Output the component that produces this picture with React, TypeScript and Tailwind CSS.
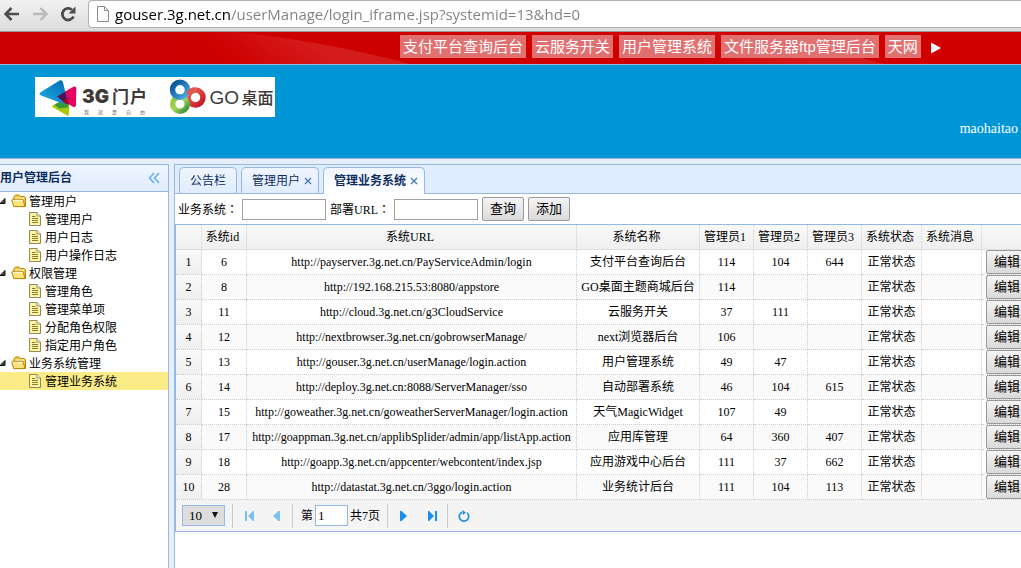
import type { ReactNode } from 'react';

const navItems = ['支付平台查询后台', '云服务开关', '用户管理系统', '文件服务器ftp管理后台', '天网'];

const tree = [
  { name: '管理用户', items: ['管理用户', '用户日志', '用户操作日志'] },
  { name: '权限管理', items: ['管理角色', '管理菜单项', '分配角色权限', '指定用户角色'] },
  { name: '业务系统管理', items: ['管理业务系统'] },
];

const tabs = [
  { name: '公告栏', closable: false },
  { name: '管理用户', closable: true },
  { name: '管理业务系统', closable: true },
];

const columns = ['系统id', '系统URL', '系统名称', '管理员1', '管理员2', '管理员3', '系统状态', '系统消息'];

const rows: string[][] = [
  ['6', 'http://payserver.3g.net.cn/PayServiceAdmin/login', '支付平台查询后台', '114', '104', '644'],
  ['8', 'http://192.168.215.53:8080/appstore', 'GO桌面主题商城后台', '114', '', ''],
  ['11', 'http://cloud.3g.net.cn/g3CloudService', '云服务开关', '37', '111', ''],
  ['12', 'http://nextbrowser.3g.net.cn/gobrowserManage/', 'next浏览器后台', '106', '', ''],
  ['13', 'http://gouser.3g.net.cn/userManage/login.action', '用户管理系统', '49', '47', ''],
  ['14', 'http://deploy.3g.net.cn:8088/ServerManager/sso', '自动部署系统', '46', '104', '615'],
  ['15', 'http://goweather.3g.net.cn/goweatherServerManager/login.action', '天气MagicWidget', '107', '49', ''],
  ['17', 'http://goappman.3g.net.cn/applibSplider/admin/app/listApp.action', '应用库管理', '64', '360', '407'],
  ['18', 'http://goapp.3g.net.cn/appcenter/webcontent/index.jsp', '应用游戏中心后台', '111', '37', '662'],
  ['28', 'http://datastat.3g.net.cn/3ggo/login.action', '业务统计后台', '111', '104', '113'],
];

function BrowserBar() {
  return (
    <div className="flex h-8 items-start border-b border-[#999] bg-linear-to-b from-[#f2f2f2] to-[#dcdcdc] font-['Open_Sans','Noto_Sans_CJK_SC',sans-serif]">
      <div className="flex shrink-0 items-center gap-3 pt-1 pl-1">
        <button aria-label="后退" className="h-5 w-4">
          <svg viewBox="0 0 16 20" className="h-5 w-4" fill="none" stroke="#4d4d4d" strokeWidth="2.6">
            <path d="M1.5 10H15M7.5 4L1.5 10L7.5 16" />
          </svg>
        </button>
        <button aria-label="前进" className="h-5 w-4">
          <svg viewBox="0 0 16 20" className="h-5 w-4" fill="none" stroke="#b9b9b9" strokeWidth="2.4">
            <path d="M1 10H14.5M8.5 4L14.5 10L8.5 16" />
          </svg>
        </button>
        <button aria-label="重新加载" className="h-5 w-4">
          <svg viewBox="0 0 16 20" className="h-5 w-4">
            <path d="M13.5 12.5A5.8 5.8 0 1 1 12 5.8" fill="none" stroke="#4d4d4d" strokeWidth="2.8" />
            <path d="M15.5 2.5V9.5H8.5Z" fill="#4d4d4d" />
          </svg>
        </button>
      </div>
      <div className="ml-3 flex h-7 flex-1 items-center gap-1.5 rounded-l-sm border border-r-0 border-[#b0b0b0] bg-white pl-2">
        <svg viewBox="0 0 12 16" className="h-4 w-3 shrink-0" fill="#fafafa" stroke="#8c8c8c">
          <path d="M.5 .5H7.5L11.5 4.500V15.5H.5ZM7.5 .5V4.500H11.5" />
        </svg>
        <input
          aria-label="地址"
          defaultValue="gouser.3g.net.cn/userManage/login_iframe.jsp?systemid=13&hd=0"
          className="h-6 min-w-0 flex-1 bg-[linear-gradient(90deg,#000_115px,#808080_115px)] bg-clip-text text-[15px] leading-6 text-transparent outline-none"
        />
      </div>
    </div>
  );
}

function TopNav() {
  return (
    <div className="relative flex h-[33px] items-start overflow-hidden border-b border-[#95b8e7] bg-[#d00000] pt-[3px] pl-[400px]">
      <svg viewBox="0 0 1021 32" preserveAspectRatio="none" className="absolute inset-0 h-8 w-full">
        <defs>
          <linearGradient id="shine" gradientUnits="userSpaceOnUse" x1="310" y1="8" x2="270" y2="62">
            <stop offset="0" stopColor="#fff" stopOpacity=".11" />
            <stop offset="1" stopColor="#fff" stopOpacity="0" />
          </linearGradient>
          <linearGradient id="fade" gradientUnits="userSpaceOnUse" x1="150" y1="0" x2="270" y2="0">
            <stop offset="0" stopColor="#cb0000" />
            <stop offset="1" stopColor="#cb0000" stopOpacity="0" />
          </linearGradient>
          <g id="swoosh">
            <path d="M235 0Q330 10 410 32H150V0Z" fill="url(#shine)" />
            <path d="M149 0H270V32H149Z" fill="url(#fade)" />
          </g>
        </defs>
        <path d="M0 0H150V32H0Z" fill="#cb0000" />
        <path d="M235 0H475V32H410Q330 10 235 0Z" fill="#cb0000" opacity=".6" />
        <use href="#swoosh" />
        <use href="#swoosh" x="475" />
      </svg>
      <nav className="relative flex items-center gap-1.5 font-['Liberation_Sans','Noto_Sans_CJK_SC',sans-serif] text-[15px] text-white">
        {navItems.map((item) => (
          <a key={item} href="#" className="h-[23px] bg-[#e17070] px-[3px] leading-[23px] whitespace-nowrap">
            {item}
          </a>
        ))}
        <button aria-label="更多" className="pl-1">
          <svg viewBox="0 0 10 12" className="mt-0.5 h-3 w-2.5" fill="#fff">
            <path d="M0 .5L10 6L0 11.5Z" />
          </svg>
        </button>
      </nav>
    </div>
  );
}

function Logo() {
  return (
    <svg viewBox="0 0 240 40" className="h-10 w-60 bg-white" role="img" aria-label="3G门户 GO桌面">
      <defs>
        <linearGradient id="lb" x1="0" y1="1" x2="1" y2="0">
          <stop offset="0" stopColor="#22b1e6" />
          <stop offset="1" stopColor="#0068b4" />
        </linearGradient>
        <linearGradient id="gb" x1="0" y1="0" x2="1" y2="1">
          <stop offset="0" stopColor="#0a4f94" />
          <stop offset=".6" stopColor="#2a86c6" />
          <stop offset="1" stopColor="#57b6e2" />
        </linearGradient>
        <linearGradient id="gr" x1="0" y1="0" x2="1" y2="1">
          <stop offset="0" stopColor="#ef6a5e" />
          <stop offset="1" stopColor="#c31522" />
        </linearGradient>
        <linearGradient id="gg" x1="0" y1="0" x2="1" y2="1">
          <stop offset="0" stopColor="#8cc63f" />
          <stop offset=".5" stopColor="#a5d45c" />
          <stop offset="1" stopColor="#2c8a32" />
        </linearGradient>
      </defs>
      <path d="M17.500 28.500L33.500 20.500Q34.500 20.500 34.400 22L34 37.500Q33.600 39.300 32 38.600L17.500 30Q16.500 29.200 17.500 28.500Z" fill="#a9cb0b" />
      <path d="M22 19L39 9.500Q41.300 9 41.300 11.500L41 28Q40.500 31 38 29.800L22 20.500Z" fill="#e6005f" />
      <path d="M5.200 15.500L24.500 3.600Q27.500 2.200 28 5.500L32.500 24.500Q32.800 28 29.500 27.300L6 18.500Q3.500 17 5.200 15.500Z" fill="url(#lb)" />
      <path d="M22 19.500L30.300 14.800L32.600 25.500L31 26.500Z" fill="#4b1457" />
      <path d="M27 24L32.600 21.200L33.800 27.300L32 27.600Z" fill="#9e0b20" />
      <path d="M19.500 27.500L24.500 25L30 27.200L33.600 27.300L33 30.500L24 31.500Z" fill="#0f8a4c" opacity=".75" />
      <text x="47" y="26" fontSize="19" fontWeight="900" fill="#3e3a39" fontFamily="Inter, sans-serif">3G</text>
      <g fontSize="17" fontWeight="700" fill="#3e3a39" fontFamily="Noto Sans CJK SC, sans-serif">
        <text x="77" y="25.5">门</text>
        <text x="95" y="25.5">户</text>
      </g>
      <g fontSize="5" fill="#666" fontFamily="Noto Sans CJK SC, sans-serif">
        <text x="49" y="36.5">我</text>
        <text x="63" y="36.5">就</text>
        <text x="77" y="36.5">是</text>
        <text x="91" y="36.5">自</text>
        <text x="105" y="36.5">由</text>
      </g>
      <g fill="none" strokeWidth="5.5">
        <circle cx="160.5" cy="20.5" r="7.5" stroke="url(#gr)" />
        <circle cx="145" cy="27" r="7.3" stroke="url(#gg)" />
        <circle cx="145" cy="12.800" r="7.500" stroke="url(#gb)" />
        <path d="M153.500 17.500A7.500 7.500 0 0 1 160 13" stroke="#e4574e" />
      </g>
      <text x="174.500" y="27" fontSize="19" fill="#3e3a39" fontFamily="Liberation Sans, sans-serif">GO</text>
      <text x="206.500" y="26.500" fontSize="16" fontWeight="500" fill="#3e3a39" fontFamily="Noto Sans CJK SC, sans-serif">桌面</text>
    </svg>
  );
}

function FolderIcon() {
  return (
    <svg viewBox="0 0 16 14" className="h-3.5 w-4 shrink-0">
      <path d="M3 12.500V2.500L4.500 1H8L9.500 2.500H13.500L14.500 3.500V12.500Z" fill="#f0c63c" stroke="#b8860b" />
      <path d="M4 3.500H13V6H4Z" fill="#fff6c0" />
      <path d="M.6 6L1.500 5.200H12L14 12.600H2.800Z" fill="#ffe27a" stroke="#b8860b" />
      <path d="M2 6.500H11.500" stroke="#fffbe0" />
    </svg>
  );
}

function FileIcon() {
  return (
    <svg viewBox="0 0 12 14" className="mx-0.5 h-3.5 w-3 shrink-0">
      <path d="M.5 .5H8L11.500 4V13.500H.5Z" fill="#fff59a" stroke="#8f8766" />
      <path d="M8 .5V4H11.500" fill="#fff" stroke="#8f8766" />
      <path d="M3 4.500H6.500M3 6.500H9M3 8.500H9M3 10.500H9" stroke="#8a7a3a" />
    </svg>
  );
}

function Sidebar() {
  return (
    <aside className="w-[169px] shrink-0 border-t border-r border-[#95b8e7] bg-white">
      <div className="flex h-[27px] items-center justify-between border-b border-[#95b8e7] bg-linear-to-b from-[#eff5ff] to-[#e0ecff] pr-2">
        <h2 className="font-bold text-[#0e2d5f]">用户管理后台</h2>
        <button aria-label="折叠">
          <svg viewBox="0 0 12 12" className="h-3 w-3" fill="none" stroke="#5aaef0" strokeWidth="1.4">
            <path d="M6 1L1.500 6L6 11M11 1L6.500 6L11 11" />
          </svg>
        </button>
      </div>
      <ul className="leading-4">
        {tree.map((group) => (
          <li key={group.name}>
            <div className="flex h-[18px] items-center">
              <svg viewBox="0 0 6 6" className="mr-[5px] h-1.5 w-1.5 shrink-0" fill="#444" stroke="#111">
                <path d="M0 5.500L5 .5V5.500Z" />
              </svg>
              <FolderIcon />
              <span className="pt-0.5 pl-0.5">{group.name}</span>
            </div>
            <ul>
              {group.items.map((item) => (
                <li key={item}>
                  <a
                    href="#"
                    className={
                      item === '管理业务系统'
                        ? 'flex h-[18px] items-center bg-[#fbec88] pl-[27px]'
                        : 'flex h-[18px] items-center pl-[27px]'
                    }
                  >
                    <FileIcon />
                    <span className="pt-0.5 pl-0.5">{item}</span>
                  </a>
                </li>
              ))}
            </ul>
          </li>
        ))}
      </ul>
    </aside>
  );
}

function Tabs() {
  return (
    <div className="flex h-[29px] items-end gap-1 border-b border-[#95b8e7] bg-[#e0ecff] pl-1">
      {tabs.map((tab, i) => (
        <div
          key={tab.name}
          className={
            i === 2
              ? '-mb-px flex h-[27px] items-center gap-1 rounded-t-[5px] border border-b-0 border-[#95b8e7] bg-linear-to-b from-[#eff5ff] to-white px-1.5 pl-2.5 font-bold text-[#0e2d5f]'
              : tab.closable
                ? 'flex h-[26px] items-center gap-1 rounded-t-[5px] border border-b-0 border-[#95b8e7] bg-linear-to-b from-[#eff5ff] to-[#e0ecff] px-1.5 pl-2.5 text-[#0e2d5f]'
                : 'flex h-[26px] items-center rounded-t-[5px] border border-b-0 border-[#95b8e7] bg-linear-to-b from-[#eff5ff] to-[#e0ecff] px-2.5 text-[#0e2d5f]'
          }
        >
          <button className="whitespace-nowrap">{tab.name}</button>
          {tab.closable && (
            <button aria-label={`关闭${tab.name}`}>
              <svg viewBox="0 0 8 8" className="h-2 w-2" fill="none" stroke="#4a78b8" strokeWidth="1.3">
                <path d="M1 1L7 7M7 1L1 7" />
              </svg>
            </button>
          )}
        </div>
      ))}
    </div>
  );
}

function GreyButton({ children }: { children: ReactNode }) {
  return (
    <button className="h-6 w-[42px] shrink-0 rounded-xs border border-[#999] bg-linear-to-b from-[#f4f4f4] to-[#dadada] text-[13px] leading-[22px] whitespace-nowrap text-black">
      {children}
    </button>
  );
}

function Colon() {
  return <span className="font-['Noto_Sans_CJK_TC',sans-serif]">：</span>;
}

function SearchForm() {
  return (
    <form className="flex h-[30px] items-center pl-[3px]" onSubmit={(e) => e.preventDefault()}>
      <label htmlFor="sys" className="w-16 leading-4 whitespace-nowrap">
        业务系统
        <Colon />
      </label>
      <input id="sys" className="h-[21px] w-[84px] border border-[#a0a0a0] px-1" />
      <label htmlFor="url" className="ml-1 w-16 leading-4 whitespace-nowrap">
        部署URL
        <Colon />
      </label>
      <input id="url" className="h-[21px] w-[84px] border border-[#a0a0a0] px-1" />
      <div className="ml-1 flex gap-1">
        <GreyButton>查询</GreyButton>
        <GreyButton>添加</GreyButton>
      </div>
    </form>
  );
}

function Grid() {
  return (
    <div className="overflow-hidden">
      <table className="w-full min-w-[900px] table-fixed border-separate border-spacing-0 text-center">
        <colgroup>
          <col className="w-[26px]" />
          <col className="w-[45px]" />
          <col className="w-[330px]" />
          <col className="w-[123px]" />
          <col className="w-[54px]" />
          <col className="w-[54px]" />
          <col className="w-[54px]" />
          <col className="w-[60px]" />
          <col className="w-[60px]" />
          <col />
        </colgroup>
        <thead className="bg-linear-to-b from-[#f9f9f9] to-[#efefef]">
          <tr>
            <th className="h-[25px] border-r border-b border-r-[#ccc] border-b-[#ddd] p-0 [border-right-style:dotted]" />
            {columns.map((c) => (
              <th
                key={c}
                className="h-[25px] border-r border-b border-r-[#ccc] border-b-[#ddd] p-0 pr-[3px] font-normal whitespace-nowrap [border-right-style:dotted]"
              >
                {c}
              </th>
            ))}
            <th className="h-[25px] border-b border-[#ddd] p-0" />
          </tr>
        </thead>
        <tbody>
          {rows.map((row, i) => (
            <tr key={row[0]} className="even:bg-[#fafafa]">
              <td className="h-[25px] border-r border-b border-dotted border-[#ccc] bg-linear-to-b from-[#f9f9f9] to-[#efefef] p-0">{i + 1}</td>
              {[...row, '正常状态', ''].map((cell, j) => (
                <td key={j} className="h-[25px] border-r border-b border-dotted border-[#ccc] p-0 whitespace-nowrap">
                  {cell}
                </td>
              ))}
              <td className="h-[25px] border-b border-dotted border-[#ccc] p-0 pl-1 text-left">
                <div className="flex">
                  <GreyButton>编辑</GreyButton>
                </div>
              </td>
            </tr>
          ))}
        </tbody>
      </table>
    </div>
  );
}

function Separator() {
  return <div className="h-6 w-px bg-[#ccc]" />;
}

function Pager() {
  return (
    <div className="flex h-8 items-center border-b border-[#95b8e7] bg-[#f4f4f4] pl-1.5">
      <div className="relative mr-[7px]">
        <select
          aria-label="每页条数"
          className="block h-[21px] w-[43px] appearance-none border border-[#95b8e7] bg-[#ddd] pl-1.5 text-[13px] leading-[19px]"
        >
          <option>10</option>
          <option>20</option>
        </select>
        <svg viewBox="0 0 8 8" className="pointer-events-none absolute top-1.5 right-1.5 h-2 w-2" fill="#111">
          <path d="M1 1H7L4 7Z" />
        </svg>
      </div>
      <Separator />
      <div className="flex w-[59px] items-center justify-between pr-3 pl-3">
        <button aria-label="首页">
          <svg viewBox="0 0 10 10" className="h-2.5 w-2.5" fill="#7cc0f0">
            <path d="M0 0H2V10H0ZM3 5L8 0V10ZM8 0H9V10H8Z" />
          </svg>
        </button>
        <button aria-label="上一页">
          <svg viewBox="0 0 7 10" className="h-2.5 w-[7px]" fill="#7cc0f0">
            <path d="M0 5L5.500 0H7V10H5.500Z" />
          </svg>
        </button>
      </div>
      <Separator />
      <div className="flex w-[94px] items-center gap-0.5 pl-2">
        <label htmlFor="page">第</label>
        <input id="page" defaultValue="1" className="h-[21px] w-[33px] border border-[#95b8e7] bg-white px-0.5 text-[13px]" />
        <span className="whitespace-nowrap">共7页</span>
      </div>
      <Separator />
      <div className="flex w-[59px] items-center justify-between pr-2.5 pl-3">
        <button aria-label="下一页">
          <svg viewBox="0 0 7 10" className="h-2.5 w-[7px]" fill="#1a8fea">
            <path d="M0 0H1.500L7 5L1.500 10H0Z" />
          </svg>
        </button>
        <button aria-label="末页">
          <svg viewBox="0 0 9 10" className="h-2.5 w-[9px]" fill="#1a8fea">
            <path d="M0 0H1L6 5L1 10H0ZM7 0H9V10H7Z" />
          </svg>
        </button>
      </div>
      <Separator />
      <button aria-label="刷新" className="pl-2.5">
        <svg viewBox="0 0 12 12" className="h-3 w-3" fill="none" stroke="#2a8fdc" strokeWidth="1.7">
          <path d="M9 2.800A4.700 4.700 0 1 1 4 2.200" />
          <path d="M4 0L8 2.500L5 5Z" fill="#2a8fdc" stroke="none" />
        </svg>
      </button>
    </div>
  );
}

export default function App() {
  return (
    <div className="flex min-h-screen flex-col bg-[#e6eef8] font-['Liberation_Serif','Noto_Sans_CJK_SC',serif] text-xs leading-4 text-black">
      <BrowserBar />
      <TopNav />
      <header className="flex h-[94px] items-start justify-between border-b border-[#95b8e7] bg-[#0096d6] pt-3 pr-[3px] pl-[35px]">
        <Logo />
        <span className="pt-11 text-sm leading-4 text-white">maohaitao</span>
      </header>
      <div className="flex flex-1 gap-[5px] pt-[5px]">
        <Sidebar />
        <main className="min-w-0 flex-1 border-t border-l border-[#95b8e7] bg-white">
          <Tabs />
          <SearchForm />
          <section className="border-t border-l border-[#95b8e7]">
            <Grid />
            <Pager />
          </section>
        </main>
      </div>
    </div>
  );
}
